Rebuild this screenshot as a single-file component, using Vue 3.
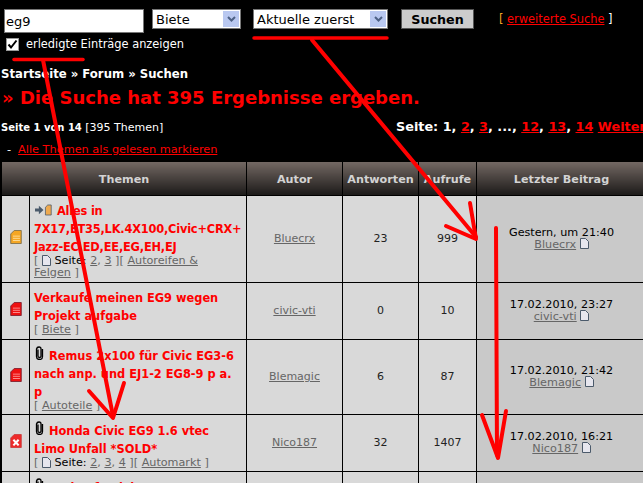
<script setup>
const rows = [
  { icon: 'orange', pre: 'arrow', title: 'Alles in\n7X17,ET35,LK.4X100,Civic+CRX+\nJazz-EC,ED,EE,EG,EH,EJ', pages: ['2', '3'], board: 'Autoreifen &\nFelgen', author: 'Bluecrx', replies: '23', views: '999', date: 'Gestern, um 21:40', cls: 'r1' },
  { icon: 'red', title: 'Verkaufe meinen EG9 wegen\nProjekt aufgabe', board: 'Biete', author: 'civic-vti', replies: '0', views: '10', date: '17.02.2010, 23:27', cls: 'r2' },
  { icon: 'red', pre: 'clip', title: 'Remus 2x100 für Civic EG3-6\nnach anp. und EJ1-2 EG8-9 p a.\np', board: 'Autoteile', author: 'Blemagic', replies: '6', views: '87', date: '17.02.2010, 21:42', cls: 'r3' },
  { icon: 'x', pre: 'clip', title: 'Honda Civic EG9 1.6 vtec\nLimo Unfall *SOLD*', pages: ['2', '3', '4'], board: 'Automarkt', author: 'Nico187', replies: '32', views: '1407', date: '17.02.2010, 16:21', cls: 'r4' },
  { icon: 'red', pre: 'clip', title: 'Verkaufe Civic', board: 'Biete', author: 'Nico187', replies: '2', views: '50', date: '17.02.2010, 12:10', cls: 'r5' }
]
</script>

<template>
  <div class="page">
    <form class="search" @submit.prevent>
      <div class="search-left">
        <input class="q" value="eg9" />
        <label class="done"><span class="check"><svg width="11" height="11" viewBox="0 0 11 11"><path d="M1.500 5.500 4 8.500 9.500 1.500" fill="none" stroke="#000" stroke-width="2"/></svg></span>erledigte Einträge anzeigen</label>
      </div>
      <div class="sel s1"><span>Biete</span><i><svg width="9" height="6" viewBox="0 0 9 6"><path d="M1 1l3.500 3.500L8 1" fill="none" stroke="#4d6185" stroke-width="2"/></svg></i></div>
      <div class="sel s2"><span>Aktuelle zuerst</span><i><svg width="9" height="6" viewBox="0 0 9 6"><path d="M1 1l3.500 3.500L8 1" fill="none" stroke="#4d6185" stroke-width="2"/></svg></i></div>
      <button class="go">Suchen</button>
      <div class="adv"><span class="ob">[</span> <a>erweiterte Suche</a> ]</div>
    </form>

    <div class="crumb">Startseite » Forum » Suchen</div>
    <h1>» Die Suche hat 395 Ergebnisse ergeben.</h1>
    <div class="pager">
      <div class="pl"><b>Seite 1 von 14</b> [395 Themen]</div>
      <div class="pr">Seite: 1, <a>2</a>, <a>3</a>, ..., <a>12</a>, <a>13</a>, <a>14</a> <a>Weiter</a></div>
    </div>
    <div class="mark"><span>-</span><a>Alle Themen als gelesen markieren</a></div>

    <table>
      <colgroup>
        <col class="c1" /><col class="c2" /><col class="c3" /><col class="c4" /><col class="c5" /><col class="c6" />
      </colgroup>
      <thead>
        <tr>
          <th colspan="2">Themen</th><th>Autor</th><th>Antworten</th><th>Aufrufe</th><th>Letzter Beitrag</th>
        </tr>
      </thead>
      <tbody>
        <tr v-for="r in rows" :key="r.cls" :class="r.cls">
          <td class="ic">
            <svg width="12" height="14" viewBox="0 0 13 16">
              <template v-if="r.icon === 'orange'">
                <path d="M4.500.5h8v15H.5V4.500z" fill="#f5a623" stroke="#7a6a45"/>
                <path d="M3 7h8M3 9.500h8M3 12h8" stroke="#ffe0a0"/>
              </template>
              <template v-else-if="r.icon === 'red'">
                <path d="M4.500.5h8v15H.5V4.500z" fill="#ee1111" stroke="#7a1a2a"/>
                <path d="M3 7h8M3 9.500h8M3 12h8" stroke="#ff9a9a"/>
              </template>
              <template v-else>
                <path d="M4.500.5h8v15H.5V4.500z" fill="#ee2a2a" stroke="#c83a3a"/>
                <path d="M3.500 6.500l6 6.500M9.500 6.500l-6 6.500" stroke="#fff" stroke-width="2.400"/>
              </template>
            </svg>
          </td>
          <td class="topic">
            <div class="title">
              <svg v-if="r.pre === 'arrow'" class="pre" width="17" height="12" viewBox="0 0 22 15">
                <path d="M0 5.500h5V2l6 5.500-6 5.500V9.500H0z" fill="#4b5a6b"/>
                <path d="M13.500 4l3-3h4.500v13h-7.500z" fill="#eea94f" stroke="#4b5a6b"/>
              </svg>
              <svg v-if="r.pre === 'clip'" class="pre clip" width="9" height="14" viewBox="0 0 9 14">
                <path d="M3 3.500v6.500q0 1.500 1.500 1.500T6 10V3q0-2-2-2T1.500 3v7.500q0 3 3 3t3-3V3" fill="none" stroke="#000" stroke-width="1.300"/>
              </svg>
              <a>{{ r.title }}</a>
            </div>
            <div class="sub">
              <span>[ </span>
              <template v-if="r.pages">
                <svg class="pg" width="9" height="11" viewBox="0 0 9 11"><path d="M.5.500h5l3 3v7H.5z" fill="#e6e6ee" stroke="#4b5a6b"/></svg>
                <span class="k"> Seite: </span>
                <template v-for="(p, i) in r.pages" :key="p"><a>{{ p }}</a><span v-if="i < r.pages.length - 1">, </span></template>
                <span> ][ </span>
              </template>
              <a>{{ r.board }}</a><span> ]</span>
            </div>
          </td>
          <td class="mid"><a>{{ r.author }}</a></td>
          <td class="mid dark">{{ r.replies }}</td>
          <td class="mid dark">{{ r.views }}</td>
          <td class="last">
            <div class="dt">{{ r.date }}</div>
            <div class="who"><a>{{ r.author }}</a> <svg class="pg" width="9" height="11" viewBox="0 0 9 11"><path d="M.5.500h5l3 3v7H.5z" fill="#e6e6ee" stroke="#4b5a6b"/></svg></div>
          </td>
        </tr>
      </tbody>
    </table>

    <svg class="marks" width="643" height="483" viewBox="0 0 643 483">
      <g fill="none" stroke="#f00" stroke-width="4" stroke-linecap="round" stroke-linejoin="round">
        <path d="M254 38H387" stroke-width="3.500"/>
        <path d="M14 59.500H83" stroke-width="3.500"/>
        <path d="M43 60 113 416"/>
        <path d="M89 391 113 418 124 383"/>
        <path d="M312 40 476 237"/>
        <path d="M470 203 476 239 446 226"/>
        <path d="M496 228 497 455"/>
        <path d="M482 415 498 458 506 411"/>
      </g>
    </svg>
  </div>
</template>

<style>
html, body { margin: 0; background: #000; overflow: hidden; }
</style>

<style scoped>
.page {
  position: relative;
  width: 643px;
  height: 483px;
  overflow: hidden;
  background: #000;
  color: #fff;
  font-family: "DejaVu Sans", Verdana, sans-serif;
  font-size: 11px;
}
a { color: #f00; text-decoration: underline; }
.search { display: flex; align-items: flex-start; padding: 9px 0 0 4px; height: 56px; box-sizing: border-box; }
.search-left { width: 148px; }
.q {
  display: block; width: 140px; height: 24px; box-sizing: border-box; padding: 0 1px;
  border: 1px solid #777; background: #fff; font: 13px "DejaVu Sans", sans-serif; color: #000;
}
.done { display: flex; align-items: center; margin: 4px 0 0 2px; white-space: nowrap; color: #fff; font-size: 11.400px; }
.check { width: 13px; height: 13px; box-sizing: border-box; border: 1px solid #999; background: #fff; margin-right: 7px; display: flex; align-items: center; justify-content: center; }
.sel {
  display: flex; align-items: center; justify-content: space-between; box-sizing: border-box;
  height: 20px; background: #fff; border: 1px solid #777; color: #000; font-size: 13px; padding: 1px 1px 1px 3px;
}
.sel i { width: 16px; height: 16px; background: #b9c8f0; display: flex; align-items: center; justify-content: center; }
.s1 { width: 89px; margin-right: 12px; }
.s2 { width: 135px; margin-right: 13px; }
.go {
  width: 73px; height: 20px; box-sizing: border-box; padding: 0; border: 1px solid #555; background: #ccc;
  font: bold 12.700px "DejaVu Sans", sans-serif; color: #000;
}
.adv { margin: 3px 0 0 25px; font-size: 11.400px; white-space: nowrap; color: #fff; }
.ob { color: #f5a623; }
.crumb { font-weight: bold; font-size: 11.700px; height: 14px; line-height: 14px; margin: 11px 0 0 1px; white-space: nowrap; }
h1 { margin: 7px 0 0 2px; color: #f00; font-size: 18px; line-height: 20px; font-weight: bold; height: 20px; white-space: nowrap; }
.pager { display: flex; height: 16px; margin-top: 11px; padding-left: 1px; white-space: nowrap; }
.pl { width: 395px; flex: none; font-size: 11px; line-height: 18px; }
.pl b { font-size: 10px; }
.pr { font-weight: bold; font-size: 12.800px; line-height: 16px; flex: none; }
.mark { display: flex; gap: 7px; margin: 8px 0 0 7px; height: 13px; line-height: 13px; font-size: 11.300px; white-space: nowrap; }
table {
  table-layout: fixed; width: 645px; margin: 6px 0 0 1px; border-collapse: collapse; border: 0;
}
.c1 { width: 28px; } .c2 { width: 217px; } .c3 { width: 96px; } .c4 { width: 76px; } .c5 { width: 58px; } .c6 { width: 170px; }
th {
  height: 33px; padding: 2px 0 0; box-sizing: border-box; border: 1px solid #000; border-top: 0;
  background: linear-gradient(#736863, #1c1a19); color: #d3d3d3; font-size: 11.200px; font-weight: bold;
}
td { padding: 0; border: 1px solid #000; background: #d9d9d9; color: #000; box-sizing: border-box; }
td a { color: #666; }
.ic { text-align: center; }
.ic svg { display: block; margin: 0 auto 3px; }
.topic { padding: 6px 2px 0 4px; vertical-align: top; overflow: hidden; }
.title { font-weight: bold; font-size: 11.400px; line-height: 18px; white-space: pre; }
.r1 .title { letter-spacing: -0.2px; }
.title a { color: #f00; text-decoration: none; }
.pre { vertical-align: -1px; margin: 0 5px 0 1px; }
.clip { vertical-align: 0; margin: 0 5px 0 1px; }
.sub { font-size: 11.200px; line-height: 12px; color: #666; white-space: pre-line; margin-top: -1px; }
.k { color: #000; }
.pg { vertical-align: -2px; }
.who .pg { vertical-align: -1px; margin-top: -3px; }
.mid { text-align: center; font-size: 11px; }
.dark { color: #222; }
.last { background: #c9c9c9; text-align: center; font-size: 11.200px; line-height: 12px; }
.who { height: 12px; }
.dt { color: #000; }
.r1 { height: 87px; } .r2 { height: 57px; } .r3 { height: 75px; } .r4 { height: 57px; } .r5 { height: 57px; }
.marks { position: absolute; left: 0; top: 0; pointer-events: none; }
</style>
